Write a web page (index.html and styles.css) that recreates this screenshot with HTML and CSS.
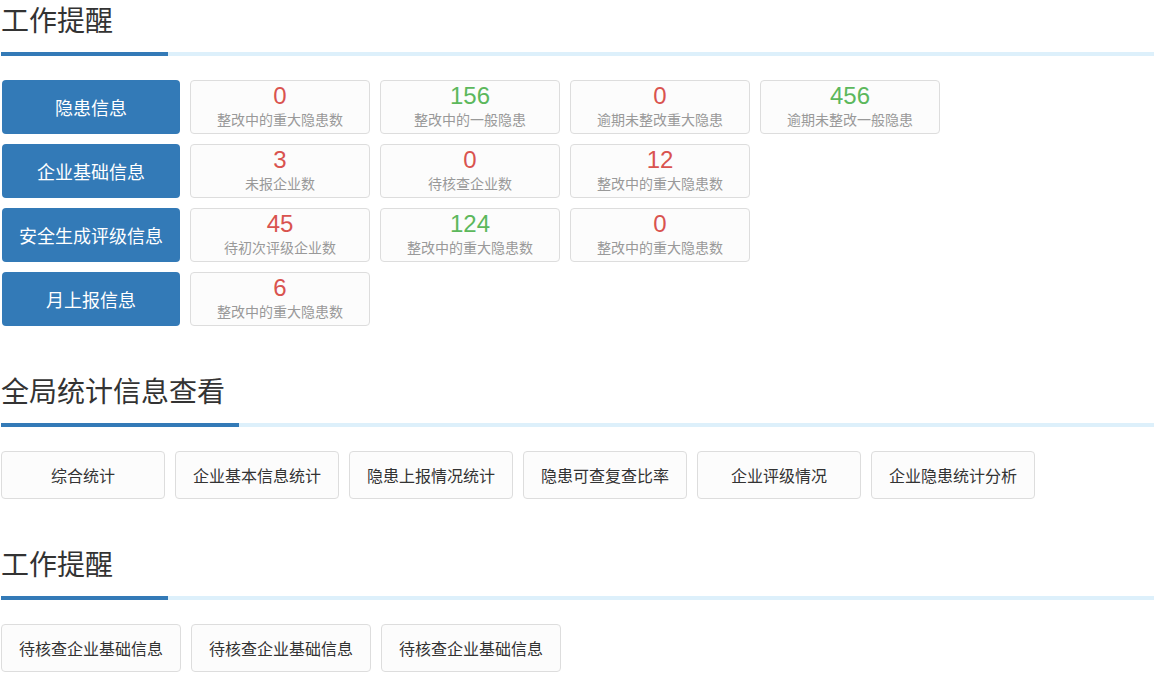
FILE: index.html
```html
<!DOCTYPE html>
<html lang="zh-CN">
<head>
<meta charset="utf-8">
<title>工作提醒</title>
<link rel="stylesheet" href="styles.css">
</head>
<body>
<div class="page">
  <section class="section">
    <h2 class="section-title">工作提醒</h2>
    <div class="section-rule"><span class="rule-mark rule-short"></span></div>
    <div class="remind-list">
      <div class="remind-row">
        <div class="category">隐患信息</div>
        <div class="stat"><div class="stat-num red">0</div><div class="stat-label">整改中的重大隐患数</div></div>
        <div class="stat"><div class="stat-num green">156</div><div class="stat-label">整改中的一般隐患</div></div>
        <div class="stat"><div class="stat-num red">0</div><div class="stat-label">逾期未整改重大隐患</div></div>
        <div class="stat"><div class="stat-num green">456</div><div class="stat-label">逾期未整改一般隐患</div></div>
      </div>
      <div class="remind-row">
        <div class="category">企业基础信息</div>
        <div class="stat"><div class="stat-num red">3</div><div class="stat-label">未报企业数</div></div>
        <div class="stat"><div class="stat-num red">0</div><div class="stat-label">待核查企业数</div></div>
        <div class="stat"><div class="stat-num red">12</div><div class="stat-label">整改中的重大隐患数</div></div>
      </div>
      <div class="remind-row">
        <div class="category">安全生成评级信息</div>
        <div class="stat"><div class="stat-num red">45</div><div class="stat-label">待初次评级企业数</div></div>
        <div class="stat"><div class="stat-num green">124</div><div class="stat-label">整改中的重大隐患数</div></div>
        <div class="stat"><div class="stat-num red">0</div><div class="stat-label">整改中的重大隐患数</div></div>
      </div>
      <div class="remind-row">
        <div class="category">月上报信息</div>
        <div class="stat"><div class="stat-num red">6</div><div class="stat-label">整改中的重大隐患数</div></div>
      </div>
    </div>
  </section>

  <section class="section">
    <h2 class="section-title">全局统计信息查看</h2>
    <div class="section-rule"><span class="rule-mark rule-long"></span></div>
    <div class="link-list">
      <div class="link-btn link-narrow">综合统计</div>
      <div class="link-btn link-narrow">企业基本信息统计</div>
      <div class="link-btn link-narrow">隐患上报情况统计</div>
      <div class="link-btn link-narrow">隐患可查复查比率</div>
      <div class="link-btn link-narrow">企业评级情况</div>
      <div class="link-btn link-narrow">企业隐患统计分析</div>
    </div>
  </section>

  <section class="section">
    <h2 class="section-title">工作提醒</h2>
    <div class="section-rule"><span class="rule-mark rule-short"></span></div>
    <div class="link-list">
      <div class="link-btn link-wide">待核查企业基础信息</div>
      <div class="link-btn link-wide">待核查企业基础信息</div>
      <div class="link-btn link-wide">待核查企业基础信息</div>
    </div>
  </section>
</div>
</body>
</html>
```

FILE: styles.css
```css
html, body {
  margin: 0;
  padding: 0;
  background: #ffffff;
}

body {
  font-family: "Liberation Sans", "Noto Sans CJK SC", sans-serif;
  color: #333333;
}

.page {
  padding: 0 2px 0 1px;
}

.section + .section {
  margin-top: 45px;
}

.section-title {
  margin: 0;
  font-family: "Noto Sans CJK SC", sans-serif;
  font-size: 28px;
  font-weight: 400;
  line-height: 38px;
  color: #333333;
}

.section-rule {
  margin-top: 14px;
  height: 4px;
  background: #ddf0fb;
  display: flex;
}

.rule-mark {
  display: block;
  height: 4px;
  background: #337ab7;
}

.rule-short { width: 167px; }
.rule-long { width: 238px; }

.remind-list {
  margin-top: 24px;
  display: flex;
  flex-direction: column;
  gap: 10px;
}

.remind-row {
  display: flex;
  gap: 10px;
}

.category {
  box-sizing: border-box;
  width: 178px;
  height: 54px;
  margin-left: 1px;
  border-radius: 4px;
  background: #337ab7;
  color: #ffffff;
  font-family: "Noto Sans CJK SC", sans-serif;
  font-size: 18px;
  display: flex;
  align-items: center;
  justify-content: center;
}

.stat {
  box-sizing: border-box;
  width: 180px;
  height: 54px;
  border: 1px solid #dddddd;
  border-radius: 4px;
  background: #fcfcfc;
  padding-top: 1px;
  display: flex;
  flex-direction: column;
  align-items: center;
}

.stat-num {
  font-size: 24px;
  line-height: 28px;
}

.stat-num.red { color: #d9534f; }
.stat-num.green { color: #5cb85c; }

.stat-label {
  font-family: "Noto Sans CJK SC", sans-serif;
  font-size: 14px;
  line-height: 18px;
  color: #999999;
}

.link-list {
  margin-top: 24px;
  display: flex;
  gap: 10px;
}

.link-btn {
  box-sizing: border-box;
  height: 48px;
  border: 1px solid #dddddd;
  border-radius: 4px;
  background: #fcfcfc;
  font-family: "Noto Sans CJK SC", sans-serif;
  font-size: 16px;
  color: #333333;
  display: flex;
  align-items: center;
  justify-content: center;
}

.link-narrow { width: 164px; }
.link-wide { width: 180px; }
```
